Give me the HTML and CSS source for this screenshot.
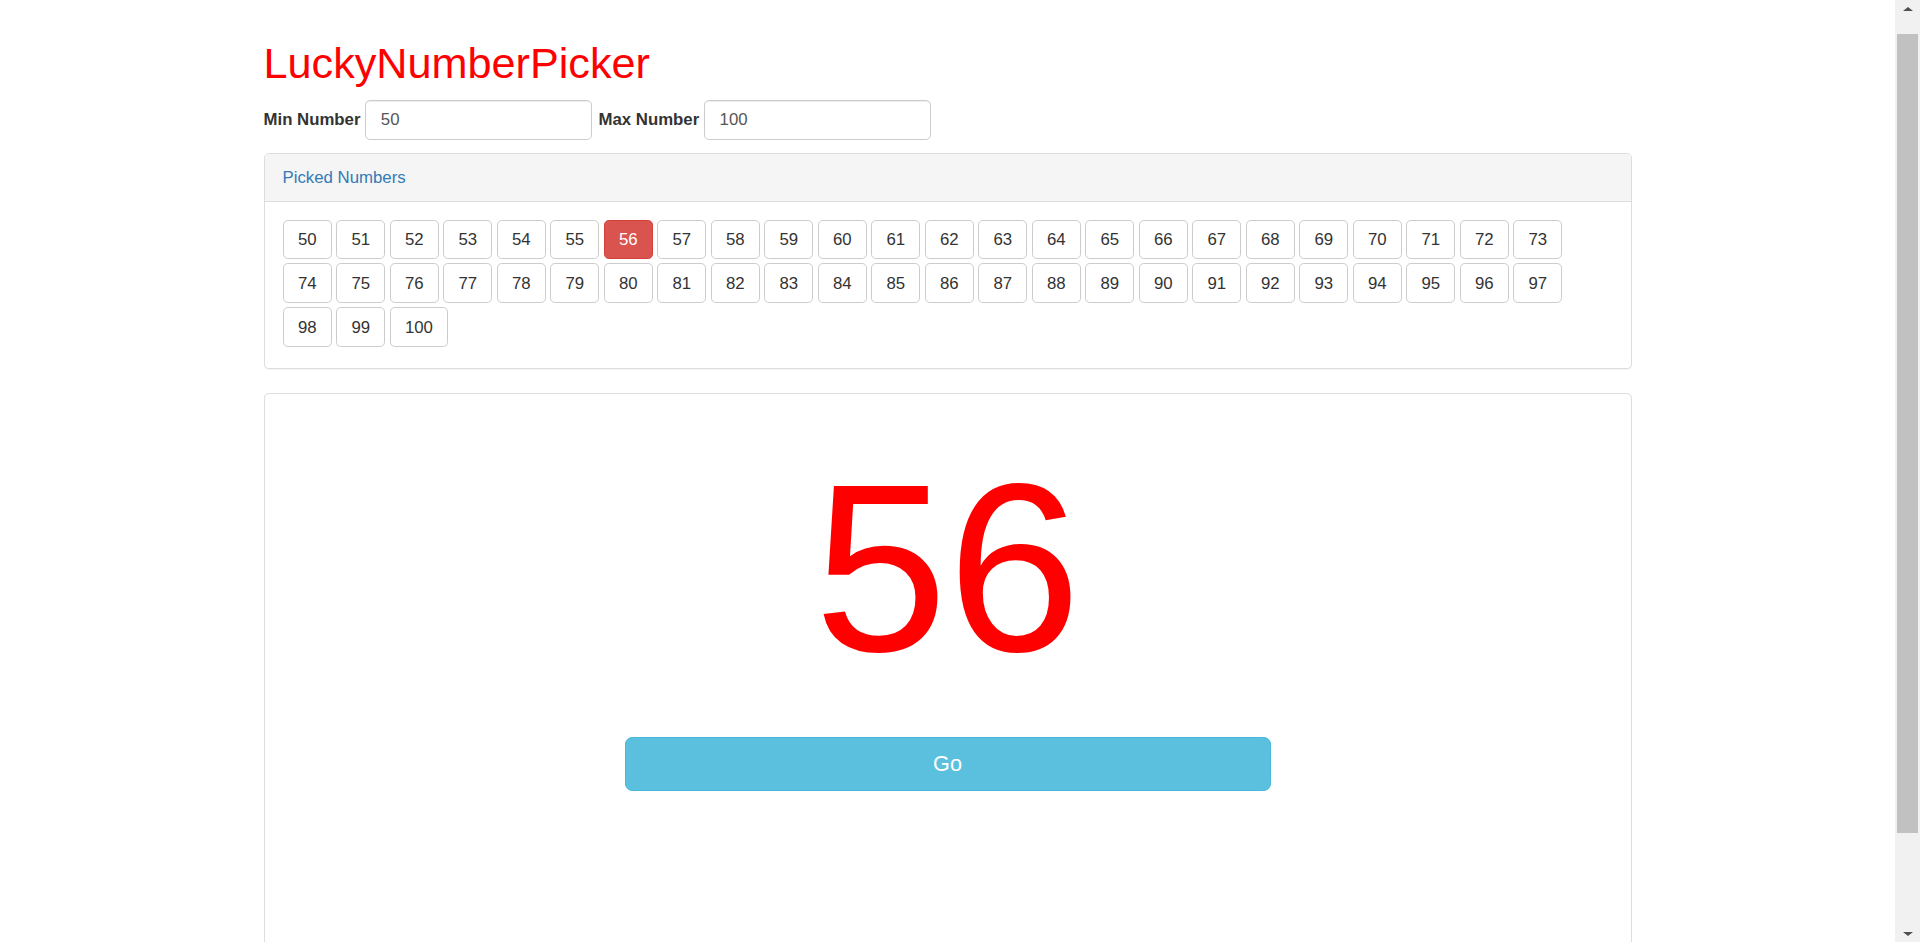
FILE: index.html
```html
<!DOCTYPE html>
<html lang="en">
<head>
<meta charset="utf-8">
<title>LuckyNumberPicker</title>
<link rel="stylesheet" href="styles.css">
</head>
<body>
<div class="page">
  <div class="container">
    <h1 class="title">LuckyNumberPicker</h1>
    <form class="range-form">
      <label class="field-label">Min Number</label>
      <input class="field-input" type="text" value="50">
      <label class="field-label">Max Number</label>
      <input class="field-input" type="text" value="100">
    </form>

    <div class="panel">
      <div class="panel-heading">Picked Numbers</div>
      <div class="panel-body numbers">
        <button class="num-btn">50</button>
        <button class="num-btn">51</button>
        <button class="num-btn">52</button>
        <button class="num-btn">53</button>
        <button class="num-btn">54</button>
        <button class="num-btn">55</button>
        <button class="num-btn num-btn-picked">56</button>
        <button class="num-btn">57</button>
        <button class="num-btn">58</button>
        <button class="num-btn">59</button>
        <button class="num-btn">60</button>
        <button class="num-btn">61</button>
        <button class="num-btn">62</button>
        <button class="num-btn">63</button>
        <button class="num-btn">64</button>
        <button class="num-btn">65</button>
        <button class="num-btn">66</button>
        <button class="num-btn">67</button>
        <button class="num-btn">68</button>
        <button class="num-btn">69</button>
        <button class="num-btn">70</button>
        <button class="num-btn">71</button>
        <button class="num-btn">72</button>
        <button class="num-btn">73</button>
        <button class="num-btn">74</button>
        <button class="num-btn">75</button>
        <button class="num-btn">76</button>
        <button class="num-btn">77</button>
        <button class="num-btn">78</button>
        <button class="num-btn">79</button>
        <button class="num-btn">80</button>
        <button class="num-btn">81</button>
        <button class="num-btn">82</button>
        <button class="num-btn">83</button>
        <button class="num-btn">84</button>
        <button class="num-btn">85</button>
        <button class="num-btn">86</button>
        <button class="num-btn">87</button>
        <button class="num-btn">88</button>
        <button class="num-btn">89</button>
        <button class="num-btn">90</button>
        <button class="num-btn">91</button>
        <button class="num-btn">92</button>
        <button class="num-btn">93</button>
        <button class="num-btn">94</button>
        <button class="num-btn">95</button>
        <button class="num-btn">96</button>
        <button class="num-btn">97</button>
        <button class="num-btn">98</button>
        <button class="num-btn">99</button>
        <button class="num-btn">100</button>
      </div>
    </div>

    <div class="panel panel-result">
      <div class="panel-body result-body">
        <div class="lucky">56</div>
        <button class="go-btn">Go</button>
      </div>
    </div>
  </div>
</div>

<div class="scrollbar">
  <div class="sb-arrow sb-up"></div>
  <div class="sb-track"><div class="sb-thumb"></div></div>
  <div class="sb-arrow sb-down"></div>
</div>
</body>
</html>
```

FILE: styles.css
```css
html {
  overflow: hidden;
}

body {
  margin: 0;
  background: #ffffff;
  font-family: "Liberation Sans", Arial, sans-serif;
  font-size: 16.8px;
  line-height: 24px;
  color: #333333;
}

.page {
  margin-right: 25px;
}

.container {
  width: 1368px;
  margin: 0 auto;
}

.title {
  margin: 40px 0 12px;
  font-size: 43.2px;
  line-height: 47.5px;
  font-weight: normal;
  color: #ff0000;
}

.range-form {
  display: flex;
  align-items: center;
  height: 40px;
  margin: 0 0 13px;
}

.field-label {
  font-weight: bold;
  margin-right: 5px;
}

.field-input {
  box-sizing: border-box;
  width: 227px;
  height: 40px;
  margin-right: 6px;
  padding: 7px 14.4px;
  font-family: "Liberation Sans", Arial, sans-serif;
  font-size: 16.8px;
  color: #555555;
  background: #ffffff;
  border: 1px solid #cccccc;
  border-radius: 4.8px;
  box-shadow: inset 0 1px 1px rgba(0, 0, 0, 0.075);
  outline: none;
}

.panel {
  background: #ffffff;
  border: 1px solid #dddddd;
  border-radius: 4.8px;
  margin-bottom: 24px;
  box-shadow: 0 1px 1px rgba(0, 0, 0, 0.05);
}

.panel-heading {
  padding: 12px 18px;
  line-height: 23px;
  color: #337ab7;
  background: #f5f5f5;
  border-bottom: 1px solid #dddddd;
  border-radius: 4px 4px 0 0;
}

.panel-body {
  padding: 18px;
}

.numbers {
  display: flex;
  flex-wrap: wrap;
  gap: 4.6px 4.05px;
  padding-bottom: 20.8px;
}

.num-btn {
  box-sizing: border-box;
  height: 39.4px;
  padding: 0 14.4px;
  font-family: "Liberation Sans", Arial, sans-serif;
  font-size: 16.8px;
  line-height: 23px;
  color: #333333;
  background: #ffffff;
  border: 1px solid #cccccc;
  border-radius: 4.8px;
}

.num-btn-picked {
  color: #ffffff;
  background: #d9534f;
  border-color: #d43f3a;
}

.panel-result {
  min-height: 660px;
}

.result-body {
  display: flex;
  flex-direction: column;
  align-items: center;
}

.lucky {
  font-size: 240px;
  line-height: 313px;
  color: #ff0000;
}

.go-btn {
  box-sizing: border-box;
  width: 646px;
  height: 54px;
  margin-top: 12px;
  font-family: "Liberation Sans", Arial, sans-serif;
  font-size: 21.6px;
  color: #ffffff;
  background: #5bc0de;
  border: 1px solid #46b8da;
  border-radius: 7.2px;
}

.scrollbar {
  position: fixed;
  top: 0;
  right: 0;
  width: 25px;
  height: 100%;
  background: #f1f1f1;
  display: flex;
  flex-direction: column;
}

.sb-arrow {
  height: 17px;
  display: flex;
  align-items: center;
  justify-content: center;
}

.sb-up::before {
  content: "";
  border-left: 5px solid transparent;
  border-right: 5px solid transparent;
  border-bottom: 4px solid #505050;
}

.sb-down::before {
  content: "";
  border-left: 5px solid transparent;
  border-right: 5px solid transparent;
  border-top: 4px solid #505050;
}

.sb-track {
  flex: 1;
  padding: 17px 2px 0;
}

.sb-thumb {
  height: 799px;
  background: #c1c1c1;
}
```
